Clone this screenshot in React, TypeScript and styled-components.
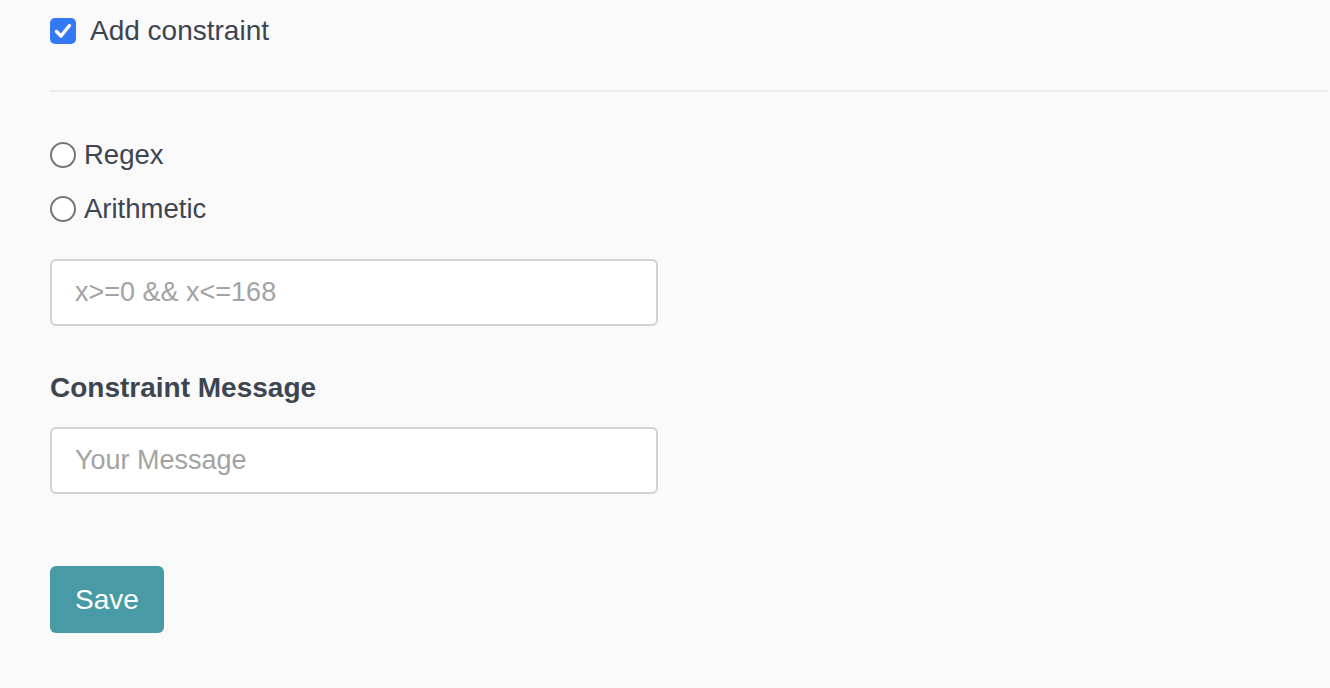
import React from "react";
import styled, { createGlobalStyle } from "styled-components";

const Global = createGlobalStyle`
  html, body { margin: 0; padding: 0; background: #fafafa; }
  body { font-family: "Liberation Sans", Arial, sans-serif; color: #3d4551; }
`;

const Page = styled.div`
  display: flex;
  flex-direction: column;
  padding: 18px 2px 40px 50px;
  min-height: 688px;
  box-sizing: border-box;
`;

const CheckRow = styled.label`
  display: flex;
  align-items: center;
  gap: 14px;
  height: 26px;
  font-size: 28px;
`;

const CheckBox = styled.span`
  width: 26px;
  height: 26px;
  border-radius: 5px;
  background: #3478f6;
  display: flex;
  align-items: center;
  justify-content: center;
`;

const Divider = styled.div`
  height: 2px;
  background: #ececec;
  margin-top: 46px;
`;

const RadioGroup = styled.div`
  display: flex;
  flex-direction: column;
  gap: 28px;
  margin-top: 50px;
`;

const RadioRow = styled.label`
  display: flex;
  align-items: center;
  gap: 8px;
  height: 26px;
  font-size: 27.5px;
`;

const RadioCircle = styled.span`
  width: 26px;
  height: 26px;
  box-sizing: border-box;
  border-radius: 50%;
  border: 2px solid #767676;
  background: #fff;
`;

const Input = styled.input<{ $top: number }>`
  width: 608px;
  height: 67px;
  box-sizing: border-box;
  margin-top: ${(p) => p.$top}px;
  border: 2px solid #d2d2d2;
  border-radius: 6px;
  background: #fff;
  padding: 0 23px;
  font-family: "Liberation Sans", Arial, sans-serif;
  font-size: 27px;
  color: #333;
  outline: none;
  &::placeholder { color: #a3a3a3; }
`;

const FieldLabel = styled.div`
  margin-top: 46px;
  font-size: 28px;
  font-weight: 700;
  line-height: 32px;
`;

const SaveButton = styled.button`
  align-self: flex-start;
  margin-top: 72px;
  width: 114px;
  height: 67px;
  border: none;
  border-radius: 6px;
  background: #489ba5;
  color: #fff;
  font-family: "Liberation Sans", Arial, sans-serif;
  font-size: 28px;
  cursor: pointer;
`;

export default function App() {
  return (
    <>
      <Global />
      <Page>
        <CheckRow>
          <CheckBox>
            <svg width="22" height="22" viewBox="0 0 22 22">
              <path d="M4.5 11.5 L9 16 L17.5 5.5" fill="none" stroke="#fff" strokeWidth="3.4" strokeLinecap="round" strokeLinejoin="round" />
            </svg>
          </CheckBox>
          Add constraint
        </CheckRow>
        <Divider />
        <RadioGroup>
          <RadioRow><RadioCircle />Regex</RadioRow>
          <RadioRow><RadioCircle />Arithmetic</RadioRow>
        </RadioGroup>
        <Input $top={37} placeholder="x>=0 && x<=168" />
        <FieldLabel>Constraint Message</FieldLabel>
        <Input $top={23} placeholder="Your Message" />
        <SaveButton>Save</SaveButton>
      </Page>
    </>
  );
}
